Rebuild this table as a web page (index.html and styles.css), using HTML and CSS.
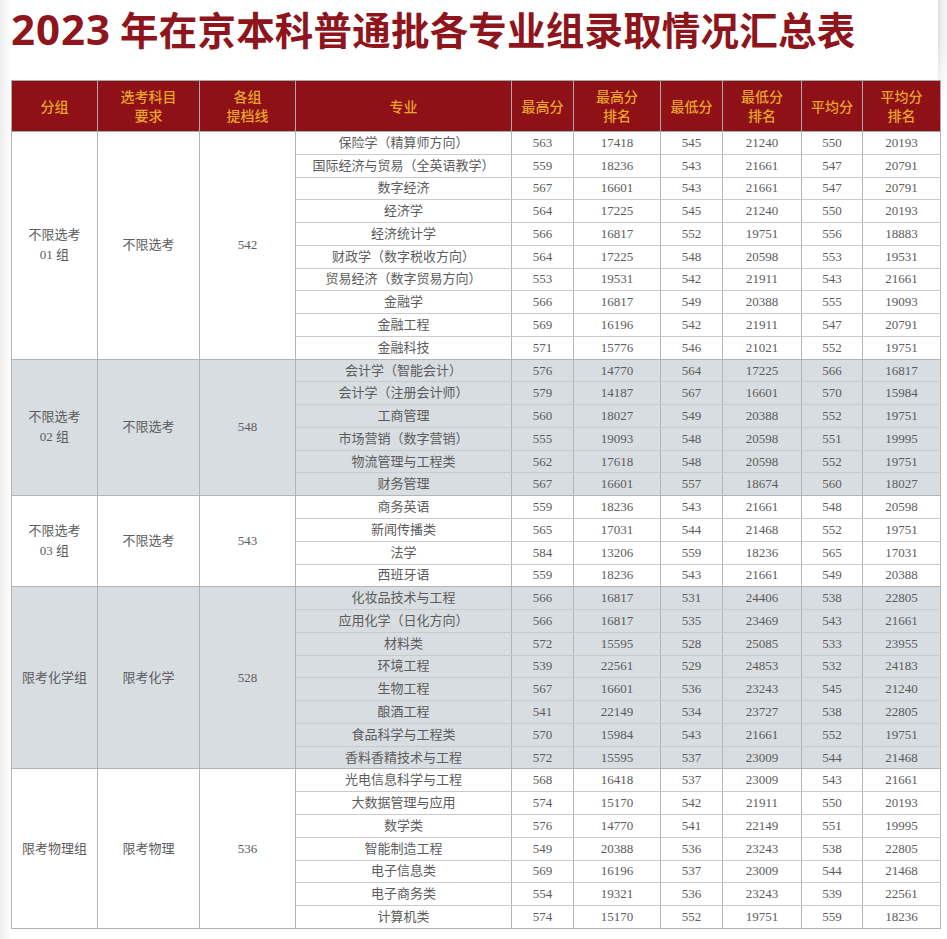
FILE: index.html
```html
<!DOCTYPE html>
<html lang="zh-CN">
<head>
<meta charset="utf-8">
<title>2023 年在京本科普通批各专业组录取情况汇总表</title>
<link rel="stylesheet" href="styles.css">
</head>
<body>
<div class="page">
  <h1 class="title"><span class="year">2023</span> 年在京本科普通批各专业组录取情况汇总表</h1>
  <table class="score">
    <colgroup>
      <col class="c1"><col class="c2"><col class="c3"><col class="c4"><col class="c5">
      <col class="c6"><col class="c7"><col class="c8"><col class="c9"><col class="c10">
    </colgroup>
    <thead>
      <tr>
        <th>分组</th><th>选考科目<br>要求</th><th>各组<br>提档线</th><th>专业</th><th>最高分</th>
        <th>最高分<br>排名</th><th>最低分</th><th>最低分<br>排名</th><th>平均分</th><th>平均分<br>排名</th>
      </tr>
    </thead>
    <tbody class="grp">
      <tr><td rowspan="10" class="gc">不限选考<br>01 组</td><td rowspan="10" class="gc">不限选考</td><td rowspan="10" class="gc">542</td><td>保险学（精算师方向）</td><td>563</td><td>17418</td><td>545</td><td>21240</td><td>550</td><td>20193</td></tr>
      <tr><td>国际经济与贸易（全英语教学）</td><td>559</td><td>18236</td><td>543</td><td>21661</td><td>547</td><td>20791</td></tr>
      <tr><td>数字经济</td><td>567</td><td>16601</td><td>543</td><td>21661</td><td>547</td><td>20791</td></tr>
      <tr><td>经济学</td><td>564</td><td>17225</td><td>545</td><td>21240</td><td>550</td><td>20193</td></tr>
      <tr><td>经济统计学</td><td>566</td><td>16817</td><td>552</td><td>19751</td><td>556</td><td>18883</td></tr>
      <tr><td>财政学（数字税收方向）</td><td>564</td><td>17225</td><td>548</td><td>20598</td><td>553</td><td>19531</td></tr>
      <tr><td>贸易经济（数字贸易方向）</td><td>553</td><td>19531</td><td>542</td><td>21911</td><td>543</td><td>21661</td></tr>
      <tr><td>金融学</td><td>566</td><td>16817</td><td>549</td><td>20388</td><td>555</td><td>19093</td></tr>
      <tr><td>金融工程</td><td>569</td><td>16196</td><td>542</td><td>21911</td><td>547</td><td>20791</td></tr>
      <tr><td>金融科技</td><td>571</td><td>15776</td><td>546</td><td>21021</td><td>552</td><td>19751</td></tr>
    </tbody>
    <tbody class="grp shaded">
      <tr><td rowspan="6" class="gc">不限选考<br>02 组</td><td rowspan="6" class="gc">不限选考</td><td rowspan="6" class="gc">548</td><td>会计学（智能会计）</td><td>576</td><td>14770</td><td>564</td><td>17225</td><td>566</td><td>16817</td></tr>
      <tr><td>会计学（注册会计师）</td><td>579</td><td>14187</td><td>567</td><td>16601</td><td>570</td><td>15984</td></tr>
      <tr><td>工商管理</td><td>560</td><td>18027</td><td>549</td><td>20388</td><td>552</td><td>19751</td></tr>
      <tr><td>市场营销（数字营销）</td><td>555</td><td>19093</td><td>548</td><td>20598</td><td>551</td><td>19995</td></tr>
      <tr><td>物流管理与工程类</td><td>562</td><td>17618</td><td>548</td><td>20598</td><td>552</td><td>19751</td></tr>
      <tr><td>财务管理</td><td>567</td><td>16601</td><td>557</td><td>18674</td><td>560</td><td>18027</td></tr>
    </tbody>
    <tbody class="grp">
      <tr><td rowspan="4" class="gc">不限选考<br>03 组</td><td rowspan="4" class="gc">不限选考</td><td rowspan="4" class="gc">543</td><td>商务英语</td><td>559</td><td>18236</td><td>543</td><td>21661</td><td>548</td><td>20598</td></tr>
      <tr><td>新闻传播类</td><td>565</td><td>17031</td><td>544</td><td>21468</td><td>552</td><td>19751</td></tr>
      <tr><td>法学</td><td>584</td><td>13206</td><td>559</td><td>18236</td><td>565</td><td>17031</td></tr>
      <tr><td>西班牙语</td><td>559</td><td>18236</td><td>543</td><td>21661</td><td>549</td><td>20388</td></tr>
    </tbody>
    <tbody class="grp shaded">
      <tr><td rowspan="8" class="gc">限考化学组</td><td rowspan="8" class="gc">限考化学</td><td rowspan="8" class="gc">528</td><td>化妆品技术与工程</td><td>566</td><td>16817</td><td>531</td><td>24406</td><td>538</td><td>22805</td></tr>
      <tr><td>应用化学（日化方向）</td><td>566</td><td>16817</td><td>535</td><td>23469</td><td>543</td><td>21661</td></tr>
      <tr><td>材料类</td><td>572</td><td>15595</td><td>528</td><td>25085</td><td>533</td><td>23955</td></tr>
      <tr><td>环境工程</td><td>539</td><td>22561</td><td>529</td><td>24853</td><td>532</td><td>24183</td></tr>
      <tr><td>生物工程</td><td>567</td><td>16601</td><td>536</td><td>23243</td><td>545</td><td>21240</td></tr>
      <tr><td>酿酒工程</td><td>541</td><td>22149</td><td>534</td><td>23727</td><td>538</td><td>22805</td></tr>
      <tr><td>食品科学与工程类</td><td>570</td><td>15984</td><td>543</td><td>21661</td><td>552</td><td>19751</td></tr>
      <tr><td>香料香精技术与工程</td><td>572</td><td>15595</td><td>537</td><td>23009</td><td>544</td><td>21468</td></tr>
    </tbody>
    <tbody class="grp">
      <tr><td rowspan="7" class="gc">限考物理组</td><td rowspan="7" class="gc">限考物理</td><td rowspan="7" class="gc">536</td><td>光电信息科学与工程</td><td>568</td><td>16418</td><td>537</td><td>23009</td><td>543</td><td>21661</td></tr>
      <tr><td>大数据管理与应用</td><td>574</td><td>15170</td><td>542</td><td>21911</td><td>550</td><td>20193</td></tr>
      <tr><td>数学类</td><td>576</td><td>14770</td><td>541</td><td>22149</td><td>551</td><td>19995</td></tr>
      <tr><td>智能制造工程</td><td>549</td><td>20388</td><td>536</td><td>23243</td><td>538</td><td>22805</td></tr>
      <tr><td>电子信息类</td><td>569</td><td>16196</td><td>537</td><td>23009</td><td>544</td><td>21468</td></tr>
      <tr><td>电子商务类</td><td>554</td><td>19321</td><td>536</td><td>23243</td><td>539</td><td>22561</td></tr>
      <tr><td>计算机类</td><td>574</td><td>15170</td><td>552</td><td>19751</td><td>559</td><td>18236</td></tr>
    </tbody>
  </table>
</div>
</body>
</html>
```

FILE: styles.css
```css
html, body {
  margin: 0;
  padding: 0;
}

body {
  width: 947px;
  height: 939px;
  overflow: hidden;
  background-color: #ffffff;
  background-image:
    linear-gradient(to bottom, rgba(255,255,255,0) 0, rgba(255,255,255,0) 40px, #ffffff 120px),
    linear-gradient(to right, #dedede 0, #ececec 3px, #f6f6f6 9px),
    linear-gradient(to right, #ececec 0, #f6f6f6 5px, #ffffff 11px);
  background-repeat: no-repeat;
  background-position: right top, right top, left top;
  background-size: 9px 130px, 9px 130px, 11px 100%;
}

.page {
  padding: 5px 0 0 11px;
}

.title {
  margin: 0;
  height: 75px;
  font-family: "Noto Sans CJK SC", "Noto Sans", sans-serif;
  font-weight: 700;
  font-size: 38.5px;
  line-height: 46px;
  color: #8e151b;
  letter-spacing: 0.2px;
  white-space: nowrap;
}

.title .year {
  font-family: "Noto Sans", "Noto Sans CJK SC", sans-serif;
  font-size: 42px;
  letter-spacing: 1px;
}

.score {
  border-collapse: collapse;
  table-layout: fixed;
  width: 929px;
  font-family: "Liberation Serif", "Noto Sans CJK SC", serif;
  font-size: 13px;
  color: #5c5c5c;
}

.c1 { width: 86px; }
.c2 { width: 102px; }
.c3 { width: 96px; }
.c4 { width: 216px; }
.c5 { width: 62px; }
.c6 { width: 87px; }
.c7 { width: 62px; }
.c8 { width: 79px; }
.c9 { width: 61px; }
.c10 { width: 78px; }

.score th {
  height: 50px;
  padding: 0;
  background: #8d1117;
  color: #e8a42a;
  font-family: "Noto Sans CJK SC", "Noto Sans", sans-serif;
  font-weight: 500;
  font-size: 14px;
  line-height: 19px;
  border: 1px solid #a8a8a8;
  text-align: center;
  vertical-align: middle;
}

.score td {
  height: 21.77px;
  padding: 0;
  line-height: 18px;
  text-align: center;
  vertical-align: middle;
  border-left: 1.5px solid #b4b4b4;
  border-right: 1.5px solid #b4b4b4;
  border-top: 1px solid #cacaca;
  border-bottom: 1px solid #cacaca;
  white-space: nowrap;
}

.score td.gc {
  line-height: 20px;
}

.score tbody.grp tr:first-child td {
  border-top: 1.5px solid #b4b4b4;
}

.score tbody.grp tr:last-child td,
.score td.gc {
  border-bottom: 1.5px solid #b4b4b4;
}

.score tbody.shaded td {
  background: #d7dde1;
}
```
